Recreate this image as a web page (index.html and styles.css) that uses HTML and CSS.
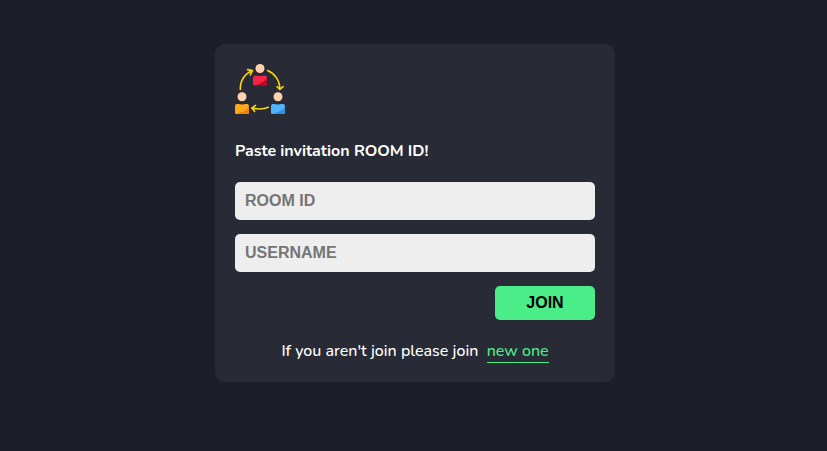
FILE: index.html
```html
<!DOCTYPE html>
<html lang="en">
<head>
<meta charset="utf-8">
<title>Join room</title>
<link rel="stylesheet" href="styles.css">
</head>
<body>
<main class="card">
  <svg class="logo" viewBox="0 0 50 50" aria-hidden="true">
    <defs>
      <clipPath id="torso"><path d="M0 10.2V3.2Q0 0 2.6 0Q7 1.2 11.4 0Q14 0 14 3.2V8.9Q14 10.2 12.7 10.2H1.3Q0 10.2 0 8.9Z"/></clipPath>
    </defs>
    <g class="arrows">
      <path d="M5.3 25.4C5 16.5 10 9.5 17.2 6.7M12.7 5.6L17.4 6.6L15.3 11"/>
      <path d="M32.6 6.5C39.5 9.3 45 16.5 44.8 25.2M42 22.5L44.8 25.4L48.1 22.6"/>
      <path d="M33.2 43.3C28.5 45.5 22 45.1 16.8 44.1M20.6 41.4L16.8 44.1L19.6 47.4"/>
    </g>
    <circle class="head" cx="25" cy="4.5" r="4.5"/>
    <g transform="translate(18 11.3)" clip-path="url(#torso)"><path class="red" d="M0 0H14V10.2H0Z"/><path class="red-shade" d="M14 2.2C13 6.5 7 8 1.5 10.2H14Z"/></g>
    <circle class="head" cx="7" cy="32.8" r="4.5"/>
    <g transform="translate(0 39.8)" clip-path="url(#torso)"><path class="orange" d="M0 0H14V10.2H0Z"/><path class="orange-shade" d="M14 2.2C13 6.5 7 8 1.5 10.2H14Z"/></g>
    <circle class="head" cx="43" cy="32.8" r="4.5"/>
    <g transform="translate(36 39.8)" clip-path="url(#torso)"><path class="blue" d="M0 0H14V10.2H0Z"/><path class="blue-shade" d="M14 2.2C13 6.5 7 8 1.5 10.2H14Z"/></g>
  </svg>
  <h4 class="title">Paste invitation ROOM ID!</h4>
  <form class="form">
    <input class="field" type="text" placeholder="ROOM ID">
    <input class="field" type="text" placeholder="USERNAME">
    <button class="join" type="button">JOIN</button>
    <p class="hint">If you aren't join please join &nbsp;<a class="link" href="#">new one</a></p>
  </form>
</main>
</body>
</html>
```
FILE: styles.css
```css
* { box-sizing: border-box; margin: 0; padding: 0; }
body {
  min-height: 451px;
  padding-top: 44px;
  padding-left: 3px;
  background: #1c1e29;
  color: #fff;
  font: 16px/22px "Nunito", "Open Sans", sans-serif;
}
.card {
  width: 400px;
  height: 338px;
  margin: 0 auto;
  padding: 20px;
  border-radius: 10px;
  background: #282a36;
}
.logo { display: block; width: 50px; height: 50px; }
.arrows { fill: none; stroke: #fbd80a; stroke-width: 1.6; stroke-linecap: round; stroke-linejoin: round; }
.head { fill: #ffd2ad; }
.red { fill: #f42348; }
.red-shade { fill: #b90b25; }
.orange { fill: #ffa81a; }
.orange-shade { fill: #f5810f; }
.blue { fill: #50b4ff; }
.blue-shade { fill: #3392d9; }
.title { height: 22px; margin: 26px 0 20px; font-size: 16px; font-weight: 700; letter-spacing: -0.05px; }
.form { display: flex; flex-direction: column; }
.field {
  height: 38px;
  margin-bottom: 14px;
  padding: 10px;
  border: 0;
  border-radius: 5px;
  outline: none;
  background: #eee;
  font: bold 16px "Liberation Sans", Arial, sans-serif;
}
.field::placeholder { color: #757575; }
.join {
  align-self: flex-end;
  width: 100px;
  height: 34px;
  border: 0;
  border-radius: 5px;
  background: #4aed88;
  color: #000;
  font: bold 16px "Liberation Sans", Arial, sans-serif;
}
.hint { margin-top: 20px; font-weight: 500; text-align: center; }
.link { border-bottom: 1px solid #4aed88; color: #4aed88; text-decoration: none; }
```
